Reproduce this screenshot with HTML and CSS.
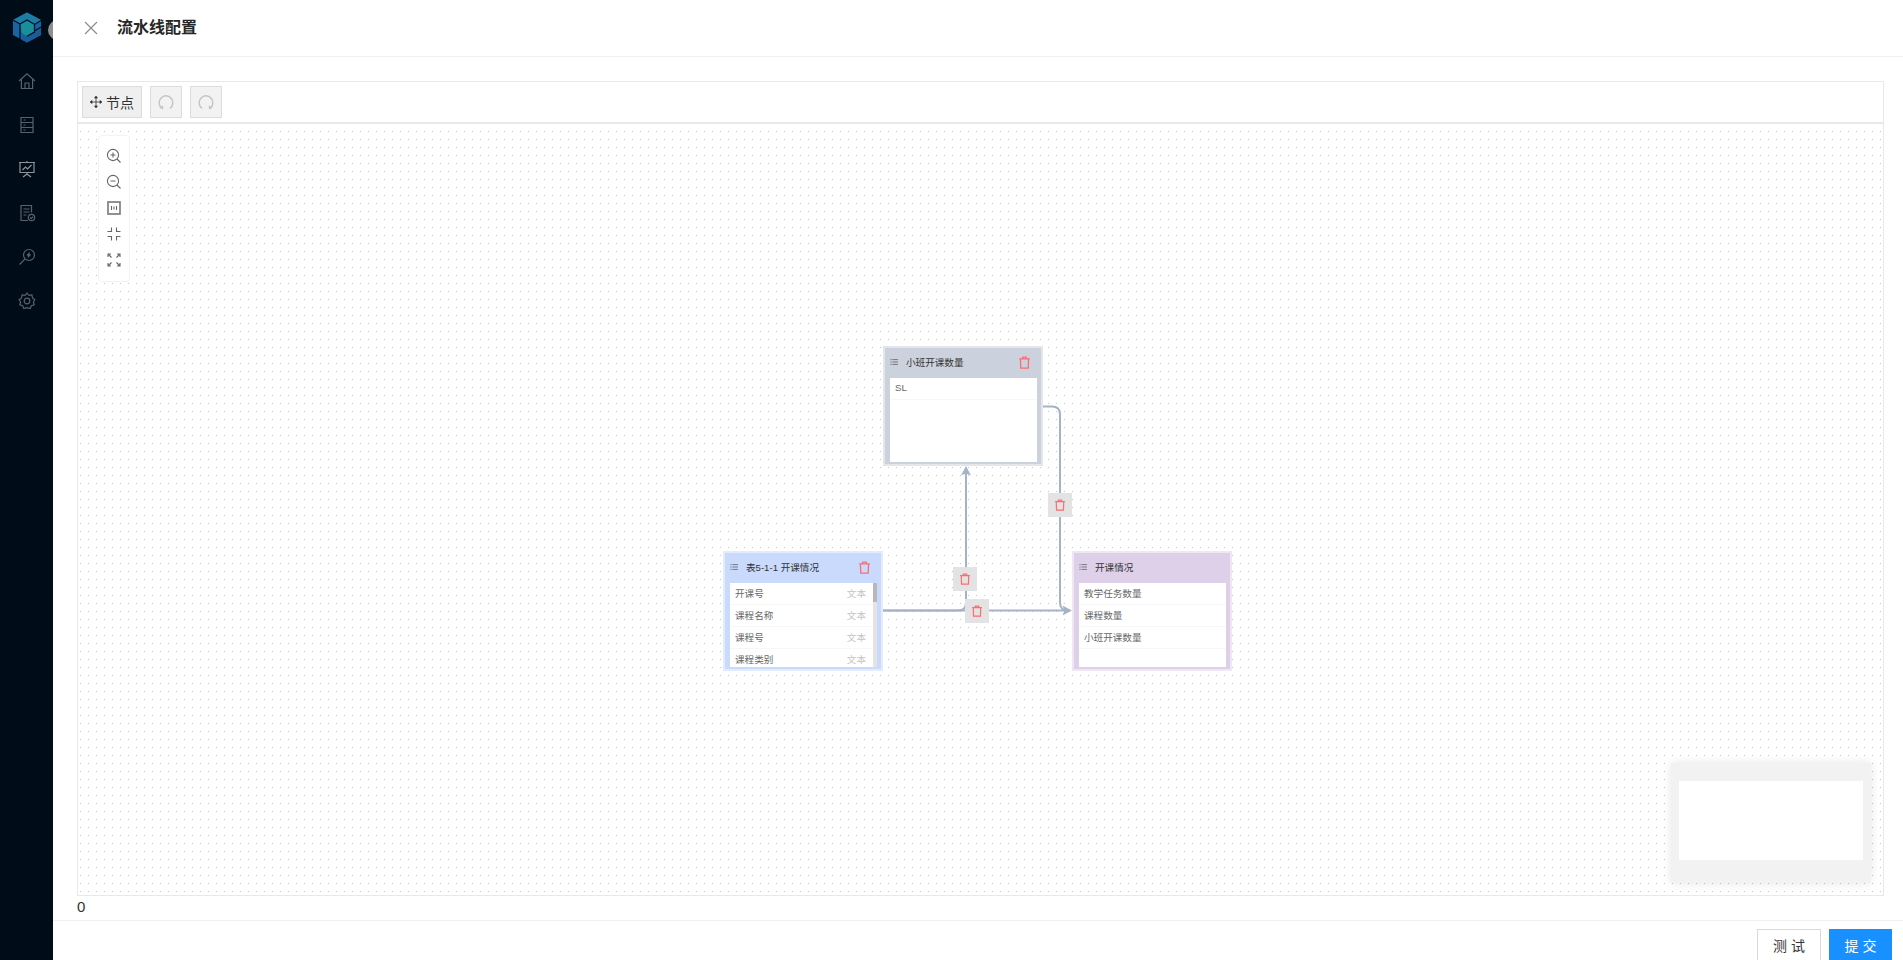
FILE: index.html
```html
<!DOCTYPE html>
<html lang="en">
<head>
  <meta charset="UTF-8" />
  <title>流水线配置</title>
  <link rel="stylesheet" href="styles.css">
</head>
<body>
  <svg width="0" height="0" class="defs">
    <symbol id="trash" viewBox="0 0 16 16">
      <path d="M1.500 3.600h13M5.400 3.400 5.800 1.400h4.400l.4 2M3 3.800l.4 11h9.200l.4-11" fill="none" stroke="currentColor" stroke-width="1.600"/>
    </symbol>
    <symbol id="lines" viewBox="0 0 10 10">
      <path d="M3 2h7M3 5h7M3 8h7M.5 2h1.500M.5 5h1.500M.5 8h1.500" fill="none" stroke="currentColor" stroke-width=".8"/>
    </symbol>
  </svg>

  <div class="app">
    <aside class="sidebar">
      <div class="avatar"></div>
      <svg class="logo" width="30" height="31" viewBox="0 0 30 31">
        <polygon points="15,0.500 29,8 29,23 15,30.500 1,23 1,8" fill="#1566a2"/>
        <polygon points="15,0.500 29,8 22,12 15,8 8,12 1,8" fill="#1b7ea6"/>
        <polygon points="29,15 29,23 15,30.500 10,28 10,23 15,25 22,20" fill="#1a5c98"/>
        <polygon points="15,8.500 22,12.500 22,20 15,24 10,21 8,12.500" fill="#178f9c"/>
        <path d="M8 12 15 8l7.500 4.300v7.700l-7.500 4.300M8 12v15.500M22.500 12.500 29 8.500M22.500 19 29 15M8 12 1 8" fill="none" stroke="#031224" stroke-width="1.300"/>
      </svg>
      <nav class="nav">
        <svg width="18" height="18" viewBox="0 0 18 18"><path d="M1 9 9 1.800 17 9M3.400 7.500V16.500h11.200V7.500M7 16.500V11h4v5.500"/></svg>
        <svg width="18" height="18" viewBox="0 0 18 18"><path d="M3 1.500h12v15H3zM3 6.500h12M3 11.500h12M5.500 4h2M5.500 9h2M5.500 14h2"/></svg>
        <svg width="18" height="18" viewBox="0 0 18 18" class="on"><path d="M1 2.500h16M2 2.500v10h14v-10M9 1v1.500M9 12.500v1.500M5 17l4-3 4 3M4.500 10l3-3 2 2 4-4"/></svg>
        <svg width="18" height="18" viewBox="0 0 18 18"><path d="M10 16.500H3V1.500h10.500v7M5.500 5h6M5.500 8h6M5.500 11h3"/><circle cx="13.500" cy="13.500" r="3.200"/><path d="m12 13.500 1.200 1.200 2-2"/></svg>
        <svg width="18" height="18" viewBox="0 0 18 18"><circle cx="11" cy="7" r="5.500"/><path d="M7 11 1.500 16.500M9 7.500l2-2-.5 3 2-2"/></svg>
        <svg width="18" height="18" viewBox="0 0 18 18"><path d="M9 1.200 11 3.400l2.900-.4.600 2.900 2.300 1.800L15.400 10l.8 2.800-2.800 1-1.200 2.700L9 15.600l-3.200.9-1.200-2.700-2.800-1 .8-2.800L1.200 7.700 3.500 5.900 4.100 3 7 3.400z"/><circle cx="9" cy="9" r="2.800"/></svg>
      </nav>
    </aside>

    <main class="panel">
      <header class="panel-head">
        <svg class="close" width="14" height="14" viewBox="0 0 14 14"><path d="M1 1l12 12M13 1 1 13"/></svg>
        <h1>流水线配置</h1>
      </header>

      <section class="panel-body">
        <div class="editor">
          <div class="toolbar">
            <button class="tool tool-node">
              <svg width="12" height="12" viewBox="0 0 12 12"><path d="M6 .5v11M.5 6h11M6 .2 4.600 2h2.800zM6 11.800 4.600 10h2.800zM.2 6 2 4.600v2.800zM11.800 6 10 4.600v2.800z" fill="#333" stroke="#333" stroke-width=".8"/></svg>
              节点
            </button>
            <button class="tool tool-icon">
              <svg width="16" height="16" viewBox="0 0 14 14"><path d="M3.500 12.500A6 6 0 1 1 10.500 12.500"/><path d="M1.800 11.500l2 1 .2-2.200" /></svg>
            </button>
            <button class="tool tool-icon">
              <svg width="16" height="16" viewBox="0 0 14 14"><path d="M3.500 12.500A6 6 0 1 1 10.500 12.500"/><path d="M12.200 11.500l-2 1-.2-2.200"/></svg>
            </button>
          </div>

          <div class="canvas">
            <svg class="edges" width="1804" height="772" viewBox="0 0 1804 772">
              <g fill="none" stroke="#a5b3c8" stroke-width="2">
                <path d="M804 487.500H879q8 0 8-8V350"/>
                <path d="M804 487.500H985"/>
                <path d="M964 283.500H973q8 0 8 8V479.500q0 8 8 8h1"/>
              </g>
              <g fill="#a5b3c8">
                <polygon points="887,343 882,352.500 887,350.500 892,352.500"/>
                <polygon points="993,487.500 983.500,482.500 985.500,487.500 983.500,492.500"/>
              </g>
            </svg>

            <div class="zoombar">
              <svg width="16" height="16" viewBox="0 0 16 16"><circle cx="7" cy="7" r="5.600"/><path d="M11 11l3.500 3.500M4.500 7h5M7 4.500v5"/></svg>
              <svg width="16" height="16" viewBox="0 0 16 16"><circle cx="7" cy="7" r="5.600"/><path d="M11 11l3.500 3.500M4.500 7h5"/></svg>
              <svg width="16" height="16" viewBox="0 0 16 16"><rect class="fit" x="2" y="2" width="12" height="12"/><path d="M5.500 6v4M8 6.500v3M10.500 6v4"/></svg>
              <svg width="16" height="16" viewBox="0 0 16 16"><path d="M5.500 1.500v4h-4M10.500 1.500v4h4M5.500 14.500v-4h-4M10.500 14.500v-4h4"/></svg>
              <svg width="16" height="16" viewBox="0 0 16 16"><path d="M2.500 2.500l3 3M13.500 2.500l-3 3M2.500 13.500l3-3M13.500 13.500l-3-3M2 5V2h3M14 5V2h-3M2 11v3h3M14 11v3h-3"/></svg>
            </div>

            <div class="node node-blue">
              <div class="node-head">
                <svg class="node-lines" width="8" height="8"><use href="#lines"/></svg>
                <span class="node-title">表5-1-1 开课情况</span>
                <svg class="node-del" width="13" height="13"><use href="#trash"/></svg>
              </div>
              <div class="node-body">
                <div class="field"><span>开课号</span><span class="field-type">文本</span></div>
                <div class="field"><span>课程名称</span><span class="field-type">文本</span></div>
                <div class="field"><span>课程号</span><span class="field-type">文本</span></div>
                <div class="field"><span>课程类别</span><span class="field-type">文本</span></div>
                <div class="scroll"><div class="thumb"></div></div>
              </div>
            </div>

            <div class="node node-gray">
              <div class="node-head">
                <svg class="node-lines" width="8" height="8"><use href="#lines"/></svg>
                <span class="node-title">小班开课数量</span>
                <svg class="node-del" width="13" height="13"><use href="#trash"/></svg>
              </div>
              <div class="node-body">
                <div class="field"><span>SL</span></div>
              </div>
            </div>

            <div class="node node-purple">
              <div class="node-head">
                <svg class="node-lines" width="8" height="8"><use href="#lines"/></svg>
                <span class="node-title">开课情况</span>
              </div>
              <div class="node-body">
                <div class="field"><span>教学任务数量</span></div>
                <div class="field"><span>课程数量</span></div>
                <div class="field"><span>小班开课数量</span></div>
              </div>
            </div>

            <div class="edge-del del-1"><svg width="12" height="12"><use href="#trash"/></svg></div>
            <div class="edge-del del-2"><svg width="12" height="12"><use href="#trash"/></svg></div>
            <div class="edge-del del-3"><svg width="12" height="12"><use href="#trash"/></svg></div>

            <div class="minimap"><div class="minimap-view"></div></div>
          </div>
        </div>
        <div class="count">0</div>
      </section>

      <footer class="panel-foot">
        <button class="btn">测 试</button>
        <button class="btn btn-primary">提 交</button>
      </footer>
    </main>
  </div>
</body>
</html>
```

FILE: styles.css
```css
:root {
  --line: #e8e8e8;
  --red: #ff6b72;
}

* {
  box-sizing: border-box;
}

html, body {
  height: 100%;
}

body {
  margin: 0;
  overflow: hidden;
  font-family: "Liberation Sans", "Noto Sans CJK SC", sans-serif;
  color: #333;
  background: white;
}

.defs {
  position: absolute;
}

.app {
  display: flex;
  height: 960px;
}

/* left menu, mostly hidden under the drawer */
.sidebar {
  position: relative;
  width: 53px;
  flex-shrink: 0;
  background-color: #010c19;
  overflow: hidden;
  display: flex;
  flex-direction: column;
  align-items: center;
}

.avatar {
  position: absolute;
  left: 48px;
  top: 20px;
  width: 20px;
  height: 20px;
  border-radius: 50%;
  background-color: #8f8f8f;
}

.logo {
  margin-top: 12px;
  flex-shrink: 0;
}

.nav {
  margin-top: 29px;
  display: flex;
  flex-direction: column;
  gap: 26px;
}

.nav svg {
  display: block;
  fill: none;
  stroke: #59626b;
  stroke-width: 1.2;
}

.nav svg.on {
  stroke: #8d959c;
}

.panel {
  flex: 1;
  min-width: 0;
  display: flex;
  flex-direction: column;
}

.panel-head {
  height: 57px;
  flex-shrink: 0;
  display: flex;
  align-items: center;
  padding-left: 31px;
  border-bottom: 1px solid #f0f0f0;
}

.close {
  fill: none;
  stroke: #8c8c8c;
  stroke-width: 1.2;
}

h1 {
  margin: 0 0 4px 19px;
  font-size: 16px;
  font-weight: 700;
  color: #262626;
}

.panel-body {
  flex: 1;
  min-height: 0;
  padding: 24px 19px 0 24px;
  display: flex;
  flex-direction: column;
}

.editor {
  flex: 1;
  min-height: 0;
  display: flex;
  flex-direction: column;
  border: 1px solid var(--line);
}

.toolbar {
  height: 42px;
  flex-shrink: 0;
  display: flex;
  gap: 8px;
  padding: 4px;
  border-bottom: 2px solid var(--line);
}

.tool {
  height: 32px;
  padding: 0;
  display: flex;
  align-items: center;
  justify-content: center;
  background-color: #f2f2f2;
  border: 1px solid #dcdcdc;
  font-family: inherit;
}

.tool-node {
  width: 60px;
  gap: 4px;
  font-size: 14px;
  color: #333;
  background-color: #efefef;
}

.tool-icon {
  width: 32px;
}

.tool-icon svg {
  fill: none;
  stroke: #c4c4c4;
  stroke-width: 1.3;
}

.canvas {
  position: relative;
  flex: 1;
  min-height: 0;
  overflow: hidden;
  background-color: white;
  background-image: radial-gradient(circle at 2.500px 7.500px, #c4c4c4 .6px, transparent .9px);
  background-size: 8px 8px;
}

.edges {
  position: absolute;
  left: 1px;
  top: -1px;
}

.zoombar {
  position: absolute;
  left: 20px;
  top: 11px;
  width: 32px;
  height: 147px;
  padding-top: 12px;
  display: flex;
  flex-direction: column;
  align-items: center;
  gap: 10px;
  background-color: white;
  border: 1px solid #f3f3f3;
  border-radius: 4px;
}

.zoombar svg {
  flex-shrink: 0;
  fill: none;
  stroke: #666;
  stroke-width: 1.100;
}

.zoombar .fit {
  stroke-width: 1.600;
  stroke: #777;
}

/* nodes are free on the canvas, 200x150 at 0.8 zoom */
.node {
  position: absolute;
  width: 160px;
  height: 120px;
  display: flex;
  flex-direction: column;
  padding: 0 4px 2px 5px;
  border: 2px solid;
  font-size: 9.600px;
}

.node-blue {
  left: 645px;
  top: 427px;
  background-color: #c9dafc;
  border-color: #e3ecfd;
}

.node-gray {
  left: 805px;
  top: 222px;
  background-color: #cbd2dd;
  border-color: #e3e6eb;
}

.node-purple {
  left: 994px;
  top: 427px;
  background-color: #ded0e9;
  border-color: #efe7f4;
}

.node-head {
  height: 30px;
  flex-shrink: 0;
  display: flex;
  align-items: center;
  gap: 8px;
  color: #333;
}

.node-lines {
  color: #444;
  flex-shrink: 0;
  margin-bottom: 2px;
}

.node-title {
  flex: 1;
  white-space: nowrap;
  padding-bottom: 2px;
}

.node-del {
  color: var(--red);
  margin-right: 6px;
  margin-bottom: 2px;
  flex-shrink: 0;
}

.node-body {
  position: relative;
  flex: 1;
  min-height: 0;
  overflow: hidden;
  background-color: white;
}

.field {
  height: 22px;
  display: flex;
  align-items: center;
  justify-content: space-between;
  padding: 0 11px 2px 5px;
  color: #666;
  border-bottom: 1px solid #f7f7f7;
}

.field-type {
  color: #c4c4c4;
}

.scroll {
  position: absolute;
  right: 0;
  top: 0;
  bottom: 0;
  width: 4px;
  background-color: #e4e4e4;
}

.thumb {
  height: 19px;
  background-color: #b8b8b8;
}

.edge-del {
  position: absolute;
  width: 24px;
  height: 24px;
  display: flex;
  align-items: center;
  justify-content: center;
  background-color: #e3e3e3;
  color: var(--red);
}

.del-1 {
  left: 875px;
  top: 443px;
}

.del-2 {
  left: 887px;
  top: 475px;
}

.del-3 {
  left: 970px;
  top: 369px;
}

.minimap {
  position: absolute;
  left: 1593px;
  top: 639px;
  width: 200px;
  height: 120px;
  padding: 18px 8px 23px;
  background-color: #f2f2f2;
  box-shadow: 0 0 10px rgba(0, 0, 0, 0.1);
}

.minimap-view {
  height: 100%;
  background-color: white;
}

.count {
  height: 24px;
  flex-shrink: 0;
  padding-bottom: 2px;
  line-height: 22px;
  font-size: 15px;
  color: #333;
}

.panel-foot {
  height: 40px;
  flex-shrink: 0;
  display: flex;
  justify-content: flex-end;
  gap: 8px;
  padding: 8px 11px 0 0;
  border-top: 1px solid #f0f0f0;
}

.btn {
  width: 64px;
  height: 32px;
  padding: 0;
  background-color: white;
  border: 1px solid #d9d9d9;
  font-family: inherit;
  font-size: 14px;
  color: #333;
}

.btn-primary {
  width: 63px;
  background-color: #1890ff;
  border-color: #1890ff;
  color: white;
}
```
